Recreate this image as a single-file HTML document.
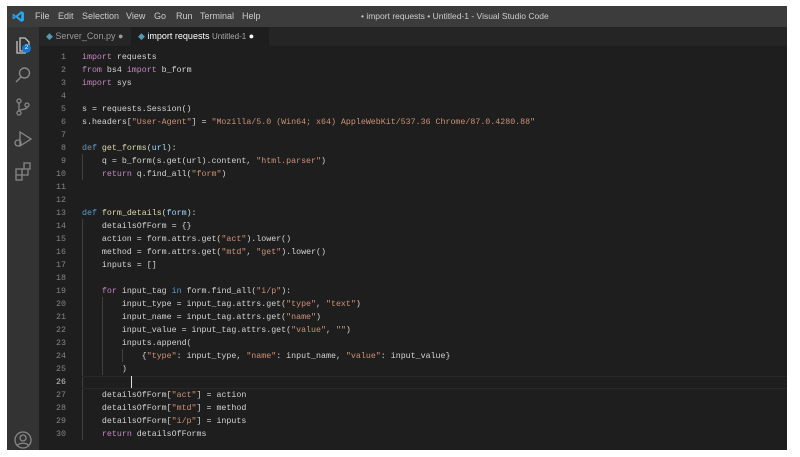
<!DOCTYPE html>
<html><head><style>
*{margin:0;padding:0;box-sizing:border-box}
body{width:800px;height:457px;background:#fff;position:relative;overflow:hidden;font-family:"Liberation Sans",sans-serif}
#win{position:absolute;left:7px;top:6px;width:780px;height:444px;background:#1e1e1e;overflow:hidden}
#title{position:absolute;left:0;top:0;width:780px;height:21px;background:#3c3c3c;color:#ccc;font-size:9px;line-height:21px}
#title span{position:absolute;top:0}
#tabs{position:absolute;left:32px;top:21px;width:748px;height:19px;background:#252526;font-size:9px;line-height:19px}
.tab{position:absolute;top:0;height:19px;color:#999}
#act{position:absolute;left:0;top:21px;width:32px;height:423px;background:#333}
#code{position:absolute;left:0;top:44.5px;width:780px;font-family:"Liberation Mono",monospace;font-size:8.3px;line-height:13px;color:#d4d4d4;white-space:pre}
.ln{position:absolute;left:30px;width:29px;text-align:right;color:#858585}
.tx{position:absolute;left:75px}
.k{color:#c586c0}.d{color:#569cd6}.f{color:#dcdcaa}.s{color:#ce9178}.v{color:#9cdcfe}
.g{position:absolute;width:1px;background:#404040}
</style></head><body>
<div id="win">
<div id="title">
<svg style="position:absolute;left:5px;top:4px" width="13" height="13" viewBox="0 0 24 24"><path d="M17 2 L22 4.5 V19.5 L17 22 L7 13.5 L3 17 L1 16 V8 L3 7 L7 10.5 Z M17 7 L11 12 L17 17 Z M3 10 V14 L5 12 Z" fill="#23a9f2"/></svg>
<span style="left:28px">File</span><span style="left:51px">Edit</span><span style="left:75px">Selection</span><span style="left:119px">View</span><span style="left:147px">Go</span><span style="left:169px">Run</span><span style="left:193px">Terminal</span><span style="left:235px">Help</span>
<span style="left:354px;font-size:8.5px">• import requests • Untitled-1 - Visual Studio Code</span>
</div>
<div id="act">
<svg style="position:absolute;left:6px;top:8px" width="20" height="20" viewBox="0 0 20 20" fill="none" stroke="#c5c5c5" stroke-width="1.3"><path d="M7 3h5l4 4v9H7z M4 6v12h9"/></svg>
<div style="position:absolute;left:15px;top:17px;width:9px;height:9px;border-radius:50%;background:#0e7ad3;color:#fff;font-size:6px;line-height:9px;text-align:center">2</div>
<svg style="position:absolute;left:6px;top:38px" width="20" height="20" viewBox="0 0 20 20" fill="none" stroke="#888" stroke-width="1.4"><circle cx="11.5" cy="8" r="5"/><path d="M8 12l-5 5"/></svg>
<svg style="position:absolute;left:6px;top:70px" width="20" height="20" viewBox="0 0 20 20" fill="none" stroke="#888" stroke-width="1.3"><circle cx="6" cy="4" r="2"/><circle cx="6" cy="16" r="2"/><circle cx="14" cy="8" r="2"/><path d="M6 6v8 M14 10c0 3-8 2-8 4"/></svg>
<svg style="position:absolute;left:6px;top:102px" width="20" height="20" viewBox="0 0 20 20" fill="none" stroke="#888" stroke-width="1.3"><path d="M7 3l11 7-11 7z"/><circle cx="5" cy="14" r="3"/></svg>
<svg style="position:absolute;left:6px;top:134px" width="20" height="20" viewBox="0 0 20 20" fill="none" stroke="#888" stroke-width="1.3"><path d="M3 8h6v6H3z M9 14h6v-6H9 M3 14v5h6v-5 M11 2h6v6h-6z"/></svg>
<svg style="position:absolute;left:6px;top:403px" width="20" height="20" viewBox="0 0 20 20" fill="none" stroke="#888" stroke-width="1.3"><circle cx="10" cy="10" r="8"/><circle cx="10" cy="8" r="3"/><path d="M4.5 15.5c2-3 9-3 11 0"/></svg>
</div>
<div id="tabs">
<div class="tab" style="left:0;width:92px;padding-left:7px"><span style="color:#519aba">◆</span> Server_Con.py <span style="color:#999">●</span></div>
<div class="tab" style="left:92px;width:138px;background:#1e1e1e;color:#fff;padding-left:7px"><span style="color:#519aba">◆</span> import requests <span style="color:#aaa;font-size:8px">Untitled-1</span> ●</div>
</div>
<div class="g" style="left:75px;top:148px;height:26px"></div>
<div class="g" style="left:75px;top:213px;height:221px"></div>
<div class="g" style="left:95px;top:291px;height:78px"></div>
<div class="g" style="left:115px;top:343px;height:13px"></div>
<div style="position:absolute;left:75px;top:369.5px;width:705px;height:13px;border-top:1px solid #282828;border-bottom:1px solid #282828"></div>
<div style="position:absolute;left:124px;top:370px;width:1px;height:12px;background:#ddd"></div>
<div id="code">
<div class="ln" style="top:0">1</div><div class="tx" style="top:0"><span class="k">import</span> requests</div>
<div class="ln" style="top:13px">2</div><div class="tx" style="top:13px"><span class="k">from</span> bs4 <span class="k">import</span> b_form</div>
<div class="ln" style="top:26px">3</div><div class="tx" style="top:26px"><span class="k">import</span> sys</div>
<div class="ln" style="top:39px">4</div>
<div class="ln" style="top:52px">5</div><div class="tx" style="top:52px">s = requests.Session()</div>
<div class="ln" style="top:65px">6</div><div class="tx" style="top:65px">s.headers[<span class="s">"User-Agent"</span>] = <span class="s">"Mozilla/5.0 (Win64; x64) AppleWebKit/537.36 Chrome/87.0.4280.88"</span></div>
<div class="ln" style="top:78px">7</div>
<div class="ln" style="top:91px">8</div><div class="tx" style="top:91px"><span class="d">def</span> <span class="f">get_forms</span>(<span class="v">url</span>):</div>
<div class="ln" style="top:104px">9</div><div class="tx" style="top:104px">    q = b_form(s.get(url).content, <span class="s">"html.parser"</span>)</div>
<div class="ln" style="top:117px">10</div><div class="tx" style="top:117px">    <span class="k">return</span> q.find_all(<span class="s">"form"</span>)</div>
<div class="ln" style="top:130px">11</div>
<div class="ln" style="top:143px">12</div>
<div class="ln" style="top:156px">13</div><div class="tx" style="top:156px"><span class="d">def</span> <span class="f">form_details</span>(<span class="v">form</span>):</div>
<div class="ln" style="top:169px">14</div><div class="tx" style="top:169px">    detailsOfForm = {}</div>
<div class="ln" style="top:182px">15</div><div class="tx" style="top:182px">    action = form.attrs.get(<span class="s">"act"</span>).lower()</div>
<div class="ln" style="top:195px">16</div><div class="tx" style="top:195px">    method = form.attrs.get(<span class="s">"mtd"</span>, <span class="s">"get"</span>).lower()</div>
<div class="ln" style="top:208px">17</div><div class="tx" style="top:208px">    inputs = []</div>
<div class="ln" style="top:221px">18</div>
<div class="ln" style="top:234px">19</div><div class="tx" style="top:234px">    <span class="k">for</span> input_tag <span class="d">in</span> form.find_all(<span class="s">"i/p"</span>):</div>
<div class="ln" style="top:247px">20</div><div class="tx" style="top:247px">        input_type = input_tag.attrs.get(<span class="s">"type"</span>, <span class="s">"text"</span>)</div>
<div class="ln" style="top:260px">21</div><div class="tx" style="top:260px">        input_name = input_tag.attrs.get(<span class="s">"name"</span>)</div>
<div class="ln" style="top:273px">22</div><div class="tx" style="top:273px">        input_value = input_tag.attrs.get(<span class="s">"value"</span>, <span class="s">""</span>)</div>
<div class="ln" style="top:286px">23</div><div class="tx" style="top:286px">        inputs.append(</div>
<div class="ln" style="top:299px">24</div><div class="tx" style="top:299px">            {<span class="s">"type"</span>: input_type, <span class="s">"name"</span>: input_name, <span class="s">"value"</span>: input_value}</div>
<div class="ln" style="top:312px">25</div><div class="tx" style="top:312px">        )</div>
<div class="ln" style="top:325px;color:#c6c6c6">26</div>
<div class="ln" style="top:338px">27</div><div class="tx" style="top:338px">    detailsOfForm[<span class="s">"act"</span>] = action</div>
<div class="ln" style="top:351px">28</div><div class="tx" style="top:351px">    detailsOfForm[<span class="s">"mtd"</span>] = method</div>
<div class="ln" style="top:364px">29</div><div class="tx" style="top:364px">    detailsOfForm[<span class="s">"i/p"</span>] = inputs</div>
<div class="ln" style="top:377px">30</div><div class="tx" style="top:377px">    <span class="k">return</span> detailsOfForms</div>
</div>
</div>
</body></html>
